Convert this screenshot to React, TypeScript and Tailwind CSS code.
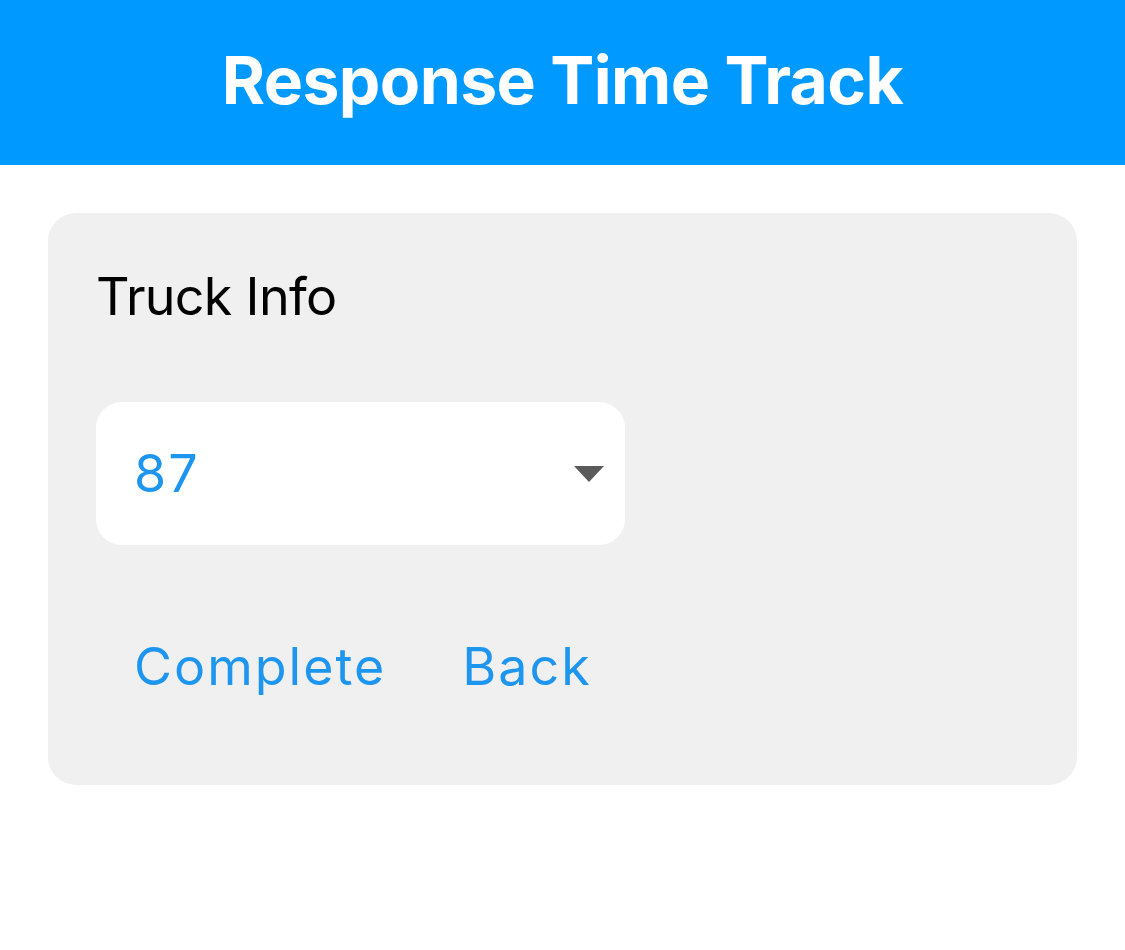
import React from "react";

const font = { fontFamily: "Inter, 'Noto Sans', sans-serif" };

const App = () => {
  return (
    <div className="min-h-screen bg-white" style={font}>
      {/* Header */}
      <div className="h-[165px] bg-[#0099ff] flex items-center justify-center">
        <h1 className="text-[66px] font-bold text-white tracking-[-0.6px] leading-none pb-[6px]">
          Response Time Track
        </h1>
      </div>

      {/* Card */}
      <div className="mx-[48px] mt-[48px] bg-[#f0f0f0] rounded-[28px] pl-[48px] pt-[58px] h-[572px]">
        <p className="text-[52px] leading-none text-black tracking-[-0.7px]">Truck Info</p>

        <div className="mt-[79px] w-[529px] h-[143px] bg-white rounded-[26px] flex items-center justify-between pl-[38px] pr-[21px]">
          <span className="text-[52px] text-[#1e96f0] tracking-[2px] leading-none">87</span>
          <svg width="30" height="16" viewBox="0 0 30 16">
            <path d="M0 0 H30 L15 16 Z" fill="#5a5a5a" />
          </svg>
        </div>

        <div className="mt-[96px] flex items-center">
          <button className="px-[38px] text-[52px] leading-none text-[#1e96f0] tracking-[2px]">
            Complete
          </button>
          <button className="px-[38px] text-[52px] leading-none text-[#1e96f0] tracking-[2px]">
            Back
          </button>
        </div>
      </div>
    </div>
  );
};

export default App;
